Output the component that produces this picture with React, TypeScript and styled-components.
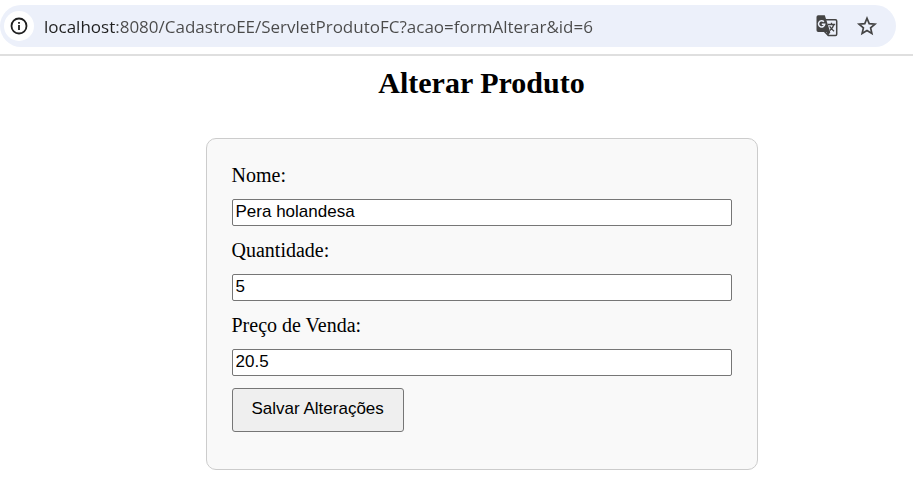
import React from 'react';
import styled, { createGlobalStyle } from 'styled-components';

const GlobalStyle = createGlobalStyle`
  * { box-sizing: border-box; }
  body { margin: 0; background: #fff; color: #000; font-family: "Liberation Serif", "Times New Roman", serif; }
`;

const Toolbar = styled.header`
  display: flex;
  padding: 5px 17px 7px 0;
  border-bottom: 2px solid #dfdfdf;
`;

const AddressBar = styled.div`
  display: flex;
  flex: 1;
  align-items: center;
  height: 42px;
  padding: 0 14px 0 4px;
  border-radius: 21px;
  background: #ecf0fa;
`;

const IconButton = styled.button<{ $filled?: boolean }>`
  display: flex;
  align-items: center;
  justify-content: center;
  flex: none;
  width: 30px;
  height: 30px;
  padding: 0;
  border: 0;
  border-radius: 50%;
  background: ${({ $filled }) => ($filled ? '#fff' : 'transparent')};
  color: ${({ $filled }) => ($filled ? '#1f1f1f' : '#444')};
`;

/* The host name is darker than the rest of the address. */
const Address = styled.input`
  flex: 1;
  min-width: 0;
  margin: 0 10px;
  padding: 0;
  border: 0;
  outline: 0;
  background: linear-gradient(to right, #1f1f1f 72px, #4a4a4a 72px);
  background-clip: text;
  -webkit-background-clip: text;
  color: transparent;
  caret-color: #1f1f1f;
  font: 17px "Open Sans", "Segoe UI", sans-serif;
`;

const Actions = styled.div`
  display: flex;
  gap: 10px;
`;

const Page = styled.main`
  padding: 10px 0 27px 50px;
`;

const Title = styled.h1`
  margin: 0 0 38px;
  font-size: 30px;
  line-height: 34px;
  text-align: center;
`;

const Form = styled.form`
  max-width: 552px;
  margin: 0 auto;
  padding: 24px 25px 37px;
  border: 1px solid #ccc;
  border-radius: 10px;
  background: #f9f9f9;
`;

const Label = styled.label`
  display: block;
  margin-bottom: 12px;
  font-size: 20px;
  line-height: 24px;
`;

const Field = styled.input`
  display: block;
  width: 100%;
  height: 27px;
  margin-bottom: 12px;
  padding: 0 3px 2px;
  border: 1px solid #767676;
  border-radius: 2px;
  background: #fff;
  color: #000;
  font: 17px "Liberation Sans", Arial, sans-serif;
`;

const SubmitButton = styled.button`
  height: 44px;
  padding: 0 19px 2px;
  border: 1px solid #767676;
  border-radius: 3px;
  background: #efefef;
  color: #000;
  font: 17px "Liberation Sans", Arial, sans-serif;
`;

const fields = [
  { id: 'nome', label: 'Nome:', value: 'Pera holandesa' },
  { id: 'quantidade', label: 'Quantidade:', value: '5' },
  { id: 'preco', label: 'Preço de Venda:', value: '20.5' },
];

function InfoIcon() {
  return (
    <svg width="18" height="18" viewBox="0 0 18 18" fill="none" stroke="currentColor" strokeWidth="1.8" aria-hidden="true">
      <circle cx="9" cy="9" r="7.5" />
      <path d="M9 8v5M9 5v1.8" />
    </svg>
  );
}

function TranslateIcon() {
  return (
    <svg width="24" height="24" viewBox="0 0 24 24" aria-hidden="true">
      <path fill="#ecf0fa" stroke="currentColor" strokeWidth="1.5" strokeLinejoin="round" d="M9 5.8h11.5a1.2 1.2 0 0 1 1.2 1.2v13.3a1.2 1.2 0 0 1-1.2 1.2h-7.2L9 17Z" />
      <path fill="currentColor" d="M3.2 1.2h6.6L15.2 18H3.2A1.7 1.7 0 0 1 1.5 16.3V2.9A1.7 1.7 0 0 1 3.2 1.2Z" />
      <path fill="currentColor" d="M11.5 18h4l-2.6 3.7Z" />
      <path fill="none" stroke="#ecf0fa" strokeWidth="1.5" d="M8.9 7.7a3.1 3.1 0 1 0 .8 2.6H6.8" />
      <path fill="none" stroke="currentColor" strokeWidth="1.3" d="M13 10.5h7.2M16.5 8.8v1.7M18.9 10.5c-.6 2.3-2 4.2-4 5.9M14.7 12.3c.8 1.8 2.3 3.5 4.4 5" />
    </svg>
  );
}

function StarIcon() {
  return (
    <svg width="24" height="24" viewBox="0 0 24 24" aria-hidden="true">
      <path fill="none" stroke="currentColor" strokeWidth="1.7" d="m12 4.2 2.2 5.4 5.8.5-4.4 3.8 1.3 5.6-4.9-3-4.9 3 1.3-5.6-4.4-3.8 5.8-.5Z" />
    </svg>
  );
}

export default function App() {
  return (
    <>
      <GlobalStyle />
      <Toolbar>
        <AddressBar>
          <IconButton type="button" $filled aria-label="Informações do site"><InfoIcon /></IconButton>
          <Address aria-label="Endereço" defaultValue="localhost:8080/CadastroEE/ServletProdutoFC?acao=formAlterar&id=6" />
          <Actions>
            <IconButton type="button" aria-label="Traduzir"><TranslateIcon /></IconButton>
            <IconButton type="button" aria-label="Favoritar"><StarIcon /></IconButton>
          </Actions>
        </AddressBar>
      </Toolbar>
      <Page>
        <Title>Alterar Produto</Title>
        <Form onSubmit={(event) => event.preventDefault()}>
          {fields.map(({ id, label, value }) => (
            <React.Fragment key={id}>
              <Label htmlFor={id}>{label}</Label>
              <Field id={id} name={id} defaultValue={value} />
            </React.Fragment>
          ))}
          <SubmitButton type="submit">Salvar Alterações</SubmitButton>
        </Form>
      </Page>
    </>
  );
}
